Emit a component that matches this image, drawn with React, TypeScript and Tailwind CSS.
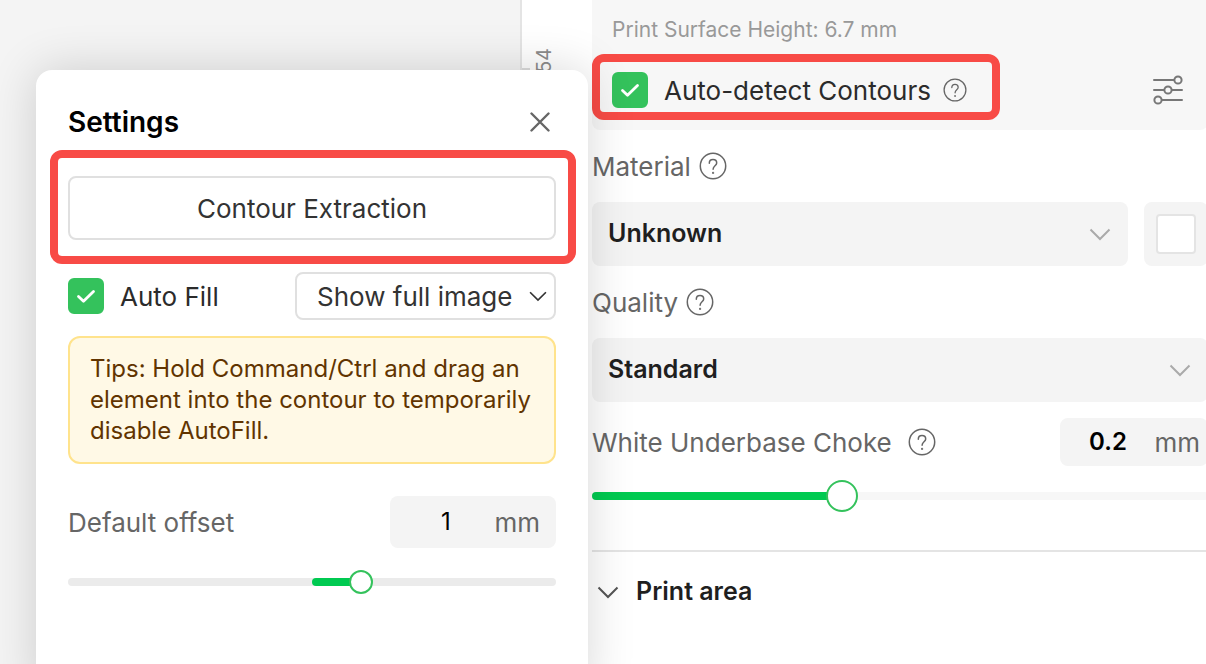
import { useState } from "react";
import type { ReactNode } from "react";

const HelpIcon = ({ className }: { className: string }) => (
  <svg viewBox="0 0 28 28" fill="none" stroke="currentColor" strokeWidth="1.5" strokeLinecap="round" className={className}>
    <circle cx="14" cy="14" r="12.7" />
    <path d="M10.3 11.2c0-2.2 1.6-3.7 3.7-3.7s3.7 1.4 3.7 3.4c0 2.8-3.6 3-3.6 6.3" />
    <circle cx="14.1" cy="20.9" r="0.4" />
  </svg>
);

const ChevronIcon = ({ className }: { className: string }) => (
  <svg viewBox="0 0 24 24" fill="none" stroke="currentColor" strokeWidth="2" className={className}>
    <path d="M2.5 7.5l9.5 9.5 9.5-9.5" />
  </svg>
);

const SlidersIcon = () => (
  <svg viewBox="0 0 32 32" fill="none" stroke="currentColor" strokeWidth="2" strokeLinecap="round" className="size-8">
    <path d="M2 6h20M2 16h10M20 16h10M10 26h20" />
    <circle cx="26" cy="6" r="3.6" />
    <circle cx="16" cy="16" r="3.6" />
    <circle cx="6" cy="26" r="3.6" />
  </svg>
);

const Checkbox = ({ label }: { label: string }) => {
  const [checked, setChecked] = useState(true);

  return (
    <label className="flex h-9 items-center gap-4 text-[26px] text-[#2b2b2b]">
      <span className="grid size-9 shrink-0 place-items-center">
        <input
          type="checkbox"
          checked={checked}
          onChange={(e) => setChecked(e.target.checked)}
          className="size-9 appearance-none rounded-md border-2 border-[#dddddd] bg-white [grid-area:1/1] checked:border-[#34c25c] checked:bg-[#34c25c]"
        />
        <svg viewBox="0 0 36 36" fill="none" stroke="#fff" strokeWidth="2.8" strokeLinecap="round" strokeLinejoin="round" className="pointer-events-none size-9 [grid-area:1/1]">
          <path d="M10.5 18.5l5 4.8L25.5 13.5" />
        </svg>
      </span>
      {label}
    </label>
  );
};

const FieldLabel = ({ htmlFor, children }: { htmlFor: string; children: ReactNode }) => (
  <div className="flex h-7 items-center gap-2 text-[26px] text-[#666666]">
    <label htmlFor={htmlFor}>{children}</label>
    <HelpIcon className="size-7" />
  </div>
);

const PanelSelect = ({ id, option }: { id: string; option: string }) => (
  <div className="grid flex-1 items-center">
    <select id={id} className="h-16 w-full appearance-none rounded-lg bg-[#f4f4f4] px-4 text-[25px] font-semibold text-[#1f1f1f] [grid-area:1/1]">
      <option>{option}</option>
    </select>
    <ChevronIcon className="pointer-events-none mr-4 size-6 justify-self-end text-[#aaaaaa] [grid-area:1/1]" />
  </div>
);

export default function App() {
  const [offset, setOffset] = useState(1);
  const [choke, setChoke] = useState(0.2);

  const offsetPercent = (offset + 5) * 10;
  const fillStart = Math.min(50, offsetPercent);
  const fillWidth = Math.abs(offsetPercent - 50);

  return (
    <div className="relative flex h-screen overflow-hidden bg-[#f4f4f4] font-['Inter',sans-serif]">
      <main className="w-[520px] shrink-0" />

      <div className="flex w-[72px] shrink-0 border-l-2 border-[#e4e4e4] bg-white pt-12">
        <div className="mt-5 h-0.5 w-2 bg-[#dddddd]" />
        <span className="rotate-180 self-start text-xl text-[#8c8c8c] [writing-mode:vertical-rl]">54</span>
      </div>

      <aside className="-mr-0.5 min-w-0 flex-1 bg-white">
        <header className="rounded-b-lg bg-[#f7f7f7] px-5 pt-4 pb-[22px]">
          <p className="text-[21px] leading-7 text-[#999999]">Print Surface Height: 6.7 mm</p>
          <div className="mt-7 flex items-center justify-between">
            <div className="relative flex items-center gap-3">
              <Checkbox label="Auto-detect Contours" />
              <HelpIcon className="size-6 text-[#666666]" />
              <div className="pointer-events-none absolute -top-[18px] -left-5 h-[66px] w-[408px] rounded-xl border-8 border-[#f84b46]" />
            </div>
            <button type="button" aria-label="Contour settings" className="mr-1 text-[#777777]">
              <SlidersIcon />
            </button>
          </div>
        </header>

        <section className="mt-[22px] space-y-[22px]">
          <FieldLabel htmlFor="material">Material</FieldLabel>
          <div className="flex gap-4">
            <PanelSelect id="material" option="Unknown" />
            <button type="button" aria-label="Material color" className="size-16 rounded-lg bg-[#f4f4f4] p-3">
              <span className="block size-10 rounded-sm border-2 border-[#e4e4e4] bg-white" />
            </button>
          </div>
          <FieldLabel htmlFor="quality">Quality</FieldLabel>
          <div className="flex">
            <PanelSelect id="quality" option="Standard" />
          </div>
        </section>

        <section className="mt-4">
          <div className="flex items-center justify-between">
            <div className="flex items-center gap-4 text-[26px] text-[#666666]">
              <label htmlFor="choke">White Underbase Choke</label>
              <HelpIcon className="size-7" />
            </div>
            <div className="flex h-12 w-[148px] items-center justify-between rounded-lg bg-[#f4f4f4] pr-2 pl-6 text-[26px]">
              <input
                id="choke"
                value={choke}
                onChange={(e) => setChoke(Number(e.target.value) || 0)}
                className="w-12 text-center text-2xl font-semibold text-black outline-none"
              />
              <span className="text-[#666666]">mm</span>
            </div>
          </div>
          <div className="mt-[14px] grid items-center">
            <div className="h-2 rounded-full bg-[#f7f7f7] [grid-area:1/1]" />
            <div className="h-2 rounded-full bg-[#00ca51] [grid-area:1/1]" style={{ width: `${choke * 200}%` }} />
            <input
              type="range"
              aria-label="White Underbase Choke"
              min="0"
              max="0.5"
              step="0.1"
              value={choke}
              onChange={(e) => setChoke(Number(e.target.value))}
              className="h-8 w-full appearance-none bg-transparent [grid-area:1/1] [&::-webkit-slider-thumb]:size-8 [&::-webkit-slider-thumb]:appearance-none [&::-webkit-slider-thumb]:rounded-full [&::-webkit-slider-thumb]:border-2 [&::-webkit-slider-thumb]:border-[#34c25c] [&::-webkit-slider-thumb]:bg-white"
            />
          </div>
        </section>

        <section className="mt-[38px] border-t-2 border-[#e4e4e4] pt-[26px]">
          <button type="button" className="flex h-7 items-center gap-4 pl-1 text-[25px] font-semibold text-[#1f1f1f]">
            <ChevronIcon className="size-6 text-[#555555]" />
            Print area
          </button>
        </section>
      </aside>

      <div
        role="dialog"
        aria-labelledby="settings-title"
        className="absolute top-[70px] -bottom-8 left-9 w-[552px] rounded-2xl bg-white px-8 pt-9 shadow-[0_0_48px_rgba(0,0,0,0.16)]"
      >
        <div className="flex h-8 items-center justify-between">
          <h2 id="settings-title" className="text-[28px] font-semibold text-black">Settings</h2>
          <button type="button" aria-label="Close" className="grid size-8 place-items-center text-[#666666]">
            <svg viewBox="0 0 20 20" stroke="currentColor" strokeWidth="2.4" strokeLinecap="round" className="size-5">
              <path d="M1.5 1.5l17 17M18.5 1.5l-17 17" />
            </svg>
          </button>
        </div>

        <div className="relative mt-[38px]">
          <button type="button" className="h-16 w-full rounded-lg border-2 border-[#e0e0e0] text-[26px] text-[#333333]">
            Contour Extraction
          </button>
          <div className="pointer-events-none absolute -top-[26px] -right-5 -bottom-6 -left-[18px] rounded-xl border-8 border-[#f84b46]" />
        </div>

        <div className="mt-8 flex items-center justify-between">
          <Checkbox label="Auto Fill" />
          <div className="grid items-center">
            <select aria-label="Image display" className="h-12 w-[261px] appearance-none rounded-lg border-2 border-[#e0e0e0] bg-white pr-10 pl-5 text-[26px] text-[#333333] [grid-area:1/1]">
              <option>Show full image</option>
            </select>
            <ChevronIcon className="pointer-events-none mr-2 size-5 justify-self-end text-[#333333] [grid-area:1/1]" />
          </div>
        </div>

        <p className="mt-4 rounded-xl border-2 border-[#ffe38c] bg-[#fff9e6] px-5 pt-[15px] pb-4 text-2xl leading-[31px] text-[#613400]">
          Tips: Hold Command/Ctrl and drag an element into the contour to temporarily disable AutoFill.
        </p>

        <div className="mt-8 flex items-center justify-between text-[26px]">
          <label htmlFor="offset" className="text-[#666666]">Default offset</label>
          <div className="flex h-[52px] w-[166px] items-center justify-between rounded-lg bg-[#f4f4f4] pr-4 pl-8">
            <input
              id="offset"
              value={offset}
              onChange={(e) => setOffset(Number(e.target.value) || 0)}
              className="w-12 text-center text-2xl text-black outline-none"
            />
            <span className="text-[#666666]">mm</span>
          </div>
        </div>
        <div className="mt-[22px] grid items-center">
          <div className="h-2 rounded-full bg-[#ebebeb] [grid-area:1/1]" />
          <div
            className="h-2 rounded-full bg-[#00ca51] [grid-area:1/1]"
            style={{ marginLeft: `${fillStart}%`, width: `${fillWidth}%` }}
          />
          <input
            type="range"
            aria-label="Default offset"
            min="-5"
            max="5"
            value={offset}
            onChange={(e) => setOffset(Number(e.target.value))}
            className="-mx-3 h-6 appearance-none bg-transparent [grid-area:1/1] [&::-webkit-slider-thumb]:size-6 [&::-webkit-slider-thumb]:appearance-none [&::-webkit-slider-thumb]:rounded-full [&::-webkit-slider-thumb]:border-2 [&::-webkit-slider-thumb]:border-[#34c25c] [&::-webkit-slider-thumb]:bg-white"
          />
        </div>
      </div>
    </div>
  );
}
